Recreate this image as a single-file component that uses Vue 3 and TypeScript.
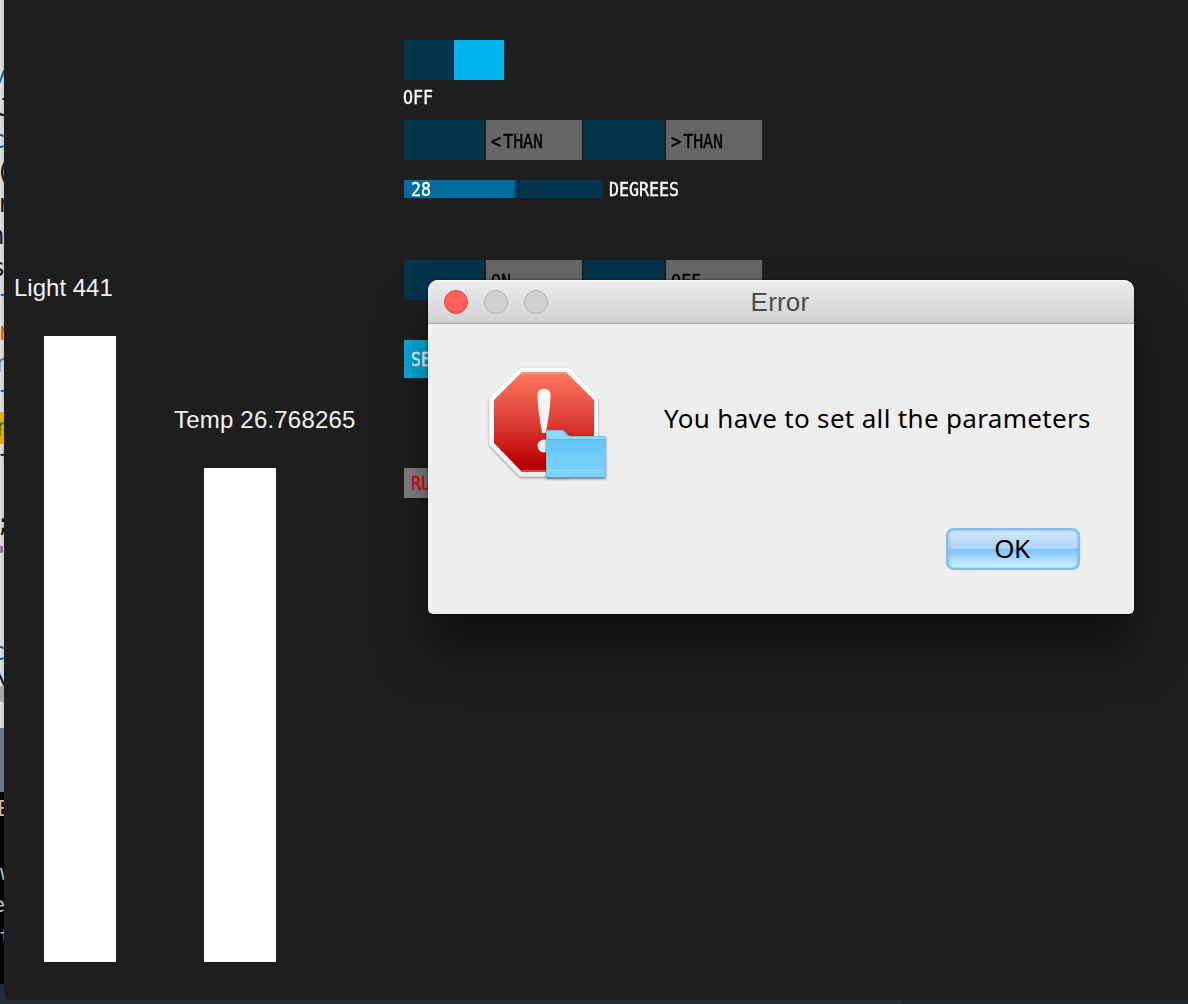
<script setup lang="ts">
interface CodeLine {
  glyph: string
  color?: string
  shift?: number
  mark?: boolean
  italic?: boolean
}

const codeLines: CodeLine[] = [
  { glyph: 'w', color: '#00628a', shift: -10, italic: true },
  { glyph: 'J', color: '#111', shift: -2 },
  { glyph: 'c', color: '#00628a', shift: -9 },
  { glyph: '(', color: '#111', shift: -4 },
  { glyph: 'r', color: '#111', shift: -3 },
  { glyph: 'n', color: '#111', shift: -10 },
  { glyph: 's', color: '#111', shift: -9 },
  { glyph: 't', color: '#00628a', shift: -1 },
  { glyph: 'r', color: '#d75a10', shift: -3 },
  { glyph: 'n', color: '#777', shift: -4 },
  { glyph: 't', color: '#00628a', shift: -1 },
  { glyph: 'n', color: '#2c7470', shift: -4, mark: true },
  { glyph: 't', color: '#111', shift: -1 },
  { glyph: '' },
  { glyph: ';', color: '#111', shift: -4 },
  { glyph: '"', color: '#7d4793', shift: -8 },
  { glyph: '' },
  { glyph: '' },
  { glyph: 'c', color: '#00628a', shift: -9 },
]

const consoleLines: CodeLine[] = [
  { glyph: 'E', shift: -3 },
  { glyph: '' },
  { glyph: 'w', shift: 0 },
  { glyph: 'e', shift: -8 },
  { glyph: 't', shift: -1 },
]

const bars = [
  { name: 'Light', value: '441', height: 626 },
  { name: 'Temp', value: '26.768265', height: 494 },
]

const comparison = ['< THAN', '> THAN']
const power = ['ON', 'OFF']
const degrees = 28
</script>

<template>
  <div class="desktop">
    <aside class="behind">
      <div class="editor">
        <div
          v-for="(line, i) in codeLines"
          :key="i"
          class="line"
          :class="{ mark: line.mark, italic: line.italic }"
        >
          <span :style="{ color: line.color, marginLeft: (line.shift ?? 0) + 'px' }">{{ line.glyph }}</span>
        </div>
        <div class="line tail"><span>\</span></div>
        <div class="scroll"></div>
      </div>
      <div class="status"></div>
      <div class="console">
        <div v-for="(line, i) in consoleLines" :key="i" class="line">
          <span :style="{ marginLeft: (line.shift ?? 0) + 'px' }">{{ line.glyph }}</span>
        </div>
      </div>
    </aside>

    <main class="sketch">
      <section class="bars">
        <div v-for="bar in bars" :key="bar.name" class="sensor">
          <div class="sensor-label">{{ bar.name }} {{ bar.value }}</div>
          <div class="bar" :style="{ height: bar.height + 'px' }"></div>
        </div>
      </section>

      <section class="controls">
        <div class="switch"><i></i></div>
        <div class="switch-label"><span class="pixel">OFF</span></div>

        <div class="options">
          <template v-for="label in comparison" :key="label">
            <div class="box"></div>
            <div class="option"><span class="pixel angle">{{ label }}</span></div>
          </template>
        </div>

        <div class="slider-row">
          <div class="slider"><div class="fill"><span class="pixel">{{ degrees }}</span></div></div>
          <span class="pixel">DEGREES</span>
        </div>

        <div class="options second">
          <template v-for="label in power" :key="label">
            <div class="box"></div>
            <div class="option"><span class="pixel">{{ label }}</span></div>
          </template>
        </div>

        <div class="set"><span class="pixel">SET</span></div>
        <div class="run"><span class="pixel">RUN</span></div>
      </section>
    </main>

    <div class="dialog" role="alertdialog">
      <header class="titlebar">
        <div class="lights"><i class="close"></i><i></i><i></i></div>
        <span class="title">Error</span>
      </header>
      <div class="content">
        <svg class="stop" width="124" height="120" viewBox="0 0 124 120">
          <defs>
            <linearGradient id="red" x1="0" y1="0" x2="0" y2="1">
              <stop offset="0" stop-color="#ff7860" />
              <stop offset=".45" stop-color="#e0443a" />
              <stop offset=".92" stop-color="#bb0000" />
              <stop offset="1" stop-color="#c00000" />
            </linearGradient>
            <linearGradient id="rim" x1="0" y1="0" x2="0" y2="1">
              <stop offset="0" stop-color="#fff" />
              <stop offset=".6" stop-color="#fff" />
              <stop offset="1" stop-color="#ececec" />
            </linearGradient>
            <linearGradient id="blue" x1="0" y1="0" x2="0" y2="1">
              <stop offset="0" stop-color="#64c6f4" />
              <stop offset="1" stop-color="#7dd3fd" />
            </linearGradient>
            <filter id="soft" x="-20%" y="-20%" width="140%" height="140%">
              <feDropShadow dx="0" dy="1.2" stdDeviation="1" flood-color="#000" flood-opacity=".45" />
            </filter>
          </defs>
          <path d="M36 4H85L114 34V81L85 112.500H36L5.500 81V34Z" fill="url(#rim)" filter="url(#soft)" />
          <path d="M38 8H82L110 36V79L82 108H38L10 79V36Z" fill="url(#red)" />
          <path d="M37 9H83" stroke="#ff927e" stroke-width="2" />
          <path d="M37 107H83" stroke="#d84a45" stroke-width="2" />
          <path d="M53.500 31C53.500 22.500 66.500 22.500 66.500 31C66.500 43 64 57 61.800 69H58.200C56 57 53.500 43 53.500 31Z" fill="#f5f5f5" />
          <circle cx="60" cy="82" r="6.500" fill="#f2f2f2" />
          <g filter="url(#soft)">
            <path d="M62 112V68Q62 66 64 66H78Q80 66 81 67.500L84 71Q85 72 87 72H120Q122 72 122 74V112Q122 114 120 114H64Q62 114 62 112Z" fill="#6fbfe6" />
            <path d="M63 76V68Q63 67 65 67H78L83 72Q84 73 87 73H121V76Z" fill="#8edafc" />
            <rect x="63" y="76" width="58" height="37" fill="url(#blue)" />
            <path d="M62 75.500H122" stroke="#5eb9e4" />
            <path d="M63 106.500H121" stroke="#98dcfa" />
            <path d="M62 113.500H122" stroke="#4fa3cd" />
          </g>
        </svg>
        <p class="message">You have to set all the parameters</p>
      </div>
      <footer class="actions"><button type="button">OK</button></footer>
    </div>
  </div>
</template>

<style>
body {
  margin: 0;
  background: #1f2830;
}
</style>

<style scoped>
.desktop {
  position: relative;
  display: flex;
  width: 1188px;
  height: 1004px;
  overflow: hidden;
  background: linear-gradient(90deg, #222d37 902px, #1b242c 902px, #1f2932 940px);
}
.behind {
  width: 4px;
  height: 1004px;
  flex: none;
  overflow: hidden;
  background: #222c37;
  font-family: "DejaVu Sans Mono", monospace;
  font-size: 24px;
}
.editor {
  box-sizing: border-box;
  height: 728px;
  padding-top: 60px;
  background: linear-gradient(90deg, #dfe1e4, #c6c9cc);
}
.line {
  display: flex;
  height: 32px;
  line-height: 33px;
}
.line.mark {
  background: #dbae00;
}
.line.italic {
  font-style: italic;
}
.line.tail {
  height: 18px;
  line-height: 24px;
  overflow: hidden;
  color: #111;
}
.line.tail span {
  margin-left: -5px;
}
.scroll {
  height: 16px;
  background: #a8a8a8;
}
.status {
  height: 64px;
  background: #6d7682;
}
.console {
  height: 192px;
  background: #000;
  color: #bbb;
  font-size: 22px;
}
.sketch {
  display: flex;
  flex: 1;
  height: 1000px;
  background: #1e1e1e;
  border-bottom-left-radius: 6px;
}
.bars {
  display: flex;
  align-items: flex-end;
  width: 400px;
  height: 962px;
}
.sensor {
  width: 160px;
}
.sensor-label {
  height: 62px;
  padding-left: 10px;
  color: #f2f2f2;
  font: 24px/28px "Liberation Sans", Arial, sans-serif;
  white-space: nowrap;
}
.sensor:last-child .sensor-label {
  letter-spacing: 0.2px;
}
.bar {
  width: 72px;
  margin-left: 40px;
  background: #fff;
}
.controls {
  width: 358px;
  padding-top: 40px;
}
.pixel {
  display: inline-block;
  font: 19px/20px "DejaVu Sans Mono", monospace;
  -webkit-text-stroke: 0.4px currentColor;
  transform: scaleX(0.874);
  transform-origin: left center;
  white-space: pre;
}
.angle {
  word-spacing: -9px;
}
.switch {
  width: 100px;
  height: 40px;
  background: #02344d;
}
.switch i {
  display: block;
  width: 50px;
  height: 40px;
  margin-left: 50px;
  background: #00b4ea;
}
.switch-label {
  display: flex;
  height: 33px;
  margin: 7px 0 0 -1px;
  color: #fff;
}
.options {
  display: grid;
  grid-template-columns: 80px 96px 80px 96px;
  gap: 2px;
  height: 40px;
}
.box {
  background: #02344d;
}
.option {
  display: flex;
  box-sizing: border-box;
  padding: 11px 0 0 5px;
  background: #666;
  color: #000;
}
.slider-row {
  display: flex;
  gap: 7px;
  height: 18px;
  margin-top: 20px;
  color: #fff;
}
.slider-row .pixel {
  line-height: 19px;
}
.slider {
  width: 198px;
  background: #02344d;
}
.fill {
  box-sizing: border-box;
  display: flex;
  width: 112px;
  height: 18px;
  padding-left: 7px;
  border-right: 2px solid #00507a;
  background: #006c9d;
}
.second {
  margin-top: 62px;
}
.set {
  display: flex;
  width: 80px;
  height: 38px;
  margin-top: 40px;
  padding: 9px 0 0 7px;
  box-sizing: border-box;
  background: #00b0e2;
  color: #fff;
}
.run {
  display: flex;
  width: 80px;
  height: 30px;
  margin-top: 90px;
  padding: 5px 0 0 7px;
  box-sizing: border-box;
  background: #868686;
  color: #f00000;
}
.dialog {
  position: absolute;
  left: 428px;
  top: 280px;
  width: 706px;
  height: 334px;
  overflow: hidden;
  border-radius: 10px 10px 5px 5px;
  background: #eee;
  box-shadow: 0 36px 50px rgba(0, 0, 0, 0.5), 0 0 3px rgba(0, 0, 0, 0.5);
}
.titlebar {
  display: grid;
  grid-template-columns: 120px 1fr 124px;
  align-items: center;
  box-sizing: border-box;
  height: 44px;
  padding-left: 16px;
  border-bottom: 1px solid #b0b0b0;
  background: linear-gradient(#f8f8f8 0, #ebebeb 2px, #d2d2d2 42px, #c4c4c4 43px);
}
.lights {
  display: flex;
  gap: 16px;
}
.lights i {
  box-sizing: border-box;
  width: 24px;
  height: 24px;
  border: 1px solid #b2b2b2;
  border-radius: 50%;
  background: #d0d0d0;
}
.lights .close {
  border-color: #e04844;
  background: #ff5f5a;
}
.title {
  padding-right: 14px;
  color: #4b4b4b;
  font: 26px/32px "Liberation Sans", Arial, sans-serif;
  letter-spacing: 0.2px;
  text-align: center;
}
.content {
  display: flex;
  height: 204px;
}
.stop {
  flex: none;
  margin: 40px 0 0 56px;
}
.message {
  margin: 76px 0 0 56px;
  color: #000;
  font: 26px/36px "Noto Sans", sans-serif;
  letter-spacing: 0.33px;
  white-space: nowrap;
}
.actions {
  display: flex;
  justify-content: flex-end;
  padding-right: 54px;
}
button {
  box-sizing: border-box;
  width: 134px;
  height: 42px;
  padding: 0 2px 2px 0;
  border: 2px solid #84bcf0;
  border-radius: 8px;
  background: linear-gradient(#d6e9fc 0, #abd3f9 48%, #83c1f9 52%, #a5d9fd 75%, #d2faff 100%);
  box-shadow: inset 0 0 3px #6dacdf, 0 0 1px #9bcaf3;
  color: #000;
  font: 26px/36px "Noto Sans", sans-serif;
  letter-spacing: -0.5px;
}
</style>
